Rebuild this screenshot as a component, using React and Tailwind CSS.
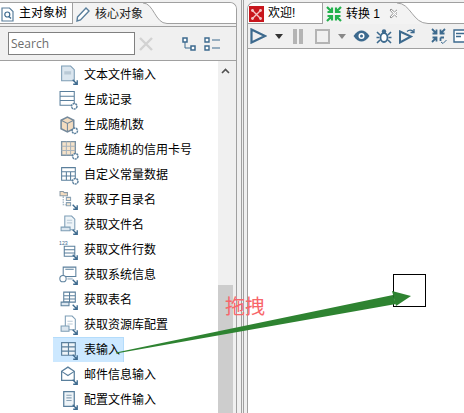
const blue = '#5a7f9c';
const dark = '#3d6a8e';
const light = '#dbe6ef';

// small "output" arrow at the lower right of most step icons
const Corner = () => <path d="M13 14l3.800 3.800M17.300 14.500v3.800h-3.800" stroke={dark} strokeWidth="1.300" fill="none" />;
const Gear = ({ x = 15, y = 15 }) => <circle cx={x} cy={y} r="2.600" fill="#fff" stroke={blue} strokeWidth="1.400" strokeDasharray="2 .6" />;

const icons = {
  textIn: <><path d="M2.500 1h8.500l3.500 3.500V15H2.500z" fill={light} stroke="#7d9db5" /><path d="M5 6h6.500v3H5z" fill="#b9c9d6" /><Corner /></>,
  record: <><path d="M1 1.500h13.500v13H1zM1 6h13.500M1 10h13.500" fill="#fff" stroke={blue} /><Gear x={14.500} y={15.500} /></>,
  random: <><path d="M2 5l6-3 6 3v8l-6 3-6-3z" fill="#f3dcc0" stroke="#74899b" strokeWidth="1.500" /><path d="M2 5l6 3 6-3M8 8v8" stroke="#74899b" fill="none" /><Gear x={15} y={15} /></>,
  credit: <><path d="M2.500 1.500h13v13h-13z" fill="#f5e2c9" stroke="#7d93a5" strokeWidth="1.300" /><path d="M2.500 6h13M2.500 10h13M7 1.500v13M11 1.500v13" stroke="#a9b4bc" fill="none" /><Gear x={15.500} y={15.500} /></>,
  constant: <><path d="M2.500 2.500h13v12h-13zM2.500 6.500h13M7 6.500v8M11 6.500v8M2.500 10.500h13" fill="#fff" stroke={blue} /><Gear x={15.500} y={15.500} /></>,
  subdir: <><path d="M1 1.500h3l1 1h3v3H1z" fill="#f3dcc0" stroke="#8a9aa6" /><path d="M7 7h4v3H7zM7 12h4v3H7z" fill="#f3e6d3" stroke="#8aa2b5" /><path d="M4 6v8h3" stroke="#8aa2b5" strokeDasharray="1.500 1" fill="none" /><Corner /></>,
  fileName: <><path d="M5.500 1h6.500l3 3v10H5.500z" fill="#eef4f8" stroke="#7d9db5" /><path d="M7.500 5h5M7.500 7.500h5" stroke="#b9c9d6" /><path d="M2 11.500h8.500v3.500H2z" fill={light} stroke="#7d9db5" /><Corner /></>,
  rows: <><text x="0" y="4.500" fontSize="5" fill={dark} fontFamily="Liberation Sans, sans-serif">123</text><path d="M5 6h10v9.500H5zM5 9.200h10M5 12.400h10" fill="#fff" stroke={blue} /><Corner /></>,
  sys: <><path d="M4 2h12v9H4z" fill="#fff" stroke={blue} /><path d="M6 4h8" stroke={blue} /><circle cx="3.800" cy="13" r="3" fill="#fff" stroke={blue} /><path d="M8 13h5" stroke="#b9c9d6" strokeWidth="2" /><Corner /></>,
  table: <><path d="M4.500 2h11v9.500h-11zM4.500 5.500h11M10 2v9.500M4.500 8.500h11" fill="#fff" stroke={blue} /><path d="M2 11.500h7.500v3.500H2z" fill={light} stroke={blue} /><Corner /></>,
  repo: <><path d="M6 1h6.500l3 3v10H6z" fill="#fff" stroke="#7d9db5" /><path d="M8 6h5M8 8.500h5" stroke="#b9c9d6" /><path d="M2 10.500h7.500V15.500H2z" fill={light} stroke="#7d9db5" /><Corner /></>,
  tableIn: <><path d="M2.500 2.500h13v12h-13zM2.500 6.500h13M2.500 10.500h13M9 2.500v12" fill="#eef4f8" stroke={blue} strokeWidth="1.100" /><Corner /></>,
  mail: <><path d="M2.500 6l6-4 6 4v8.500h-12z" fill="#fff" stroke={blue} strokeWidth="1.200" /><path d="M2.500 6l6 4 6-4" stroke={blue} fill="none" /><Corner /></>,
  config: <><path d="M4.500 1.500h10v14h-10z" fill="#eef4f8" stroke={blue} strokeWidth="1.200" /><path d="M7 5h5M7 7.500h5M7 10h5" stroke="#8aa2b5" /><Corner /></>,
};

const steps = [
  ['textIn', '文本文件输入'],
  ['record', '生成记录'],
  ['random', '生成随机数'],
  ['credit', '生成随机的信用卡号'],
  ['constant', '自定义常量数据'],
  ['subdir', '获取子目录名'],
  ['fileName', '获取文件名'],
  ['rows', '获取文件行数'],
  ['sys', '获取系统信息'],
  ['table', '获取表名'],
  ['repo', '获取资源库配置'],
  ['tableIn', '表输入'],
  ['mail', '邮件信息输入'],
  ['config', '配置文件输入'],
];

function StepRow({ icon, label }) {
  const selected = label === '表输入';
  return (
    <div className={`flex items-center h-[25px] w-[71px] shrink-0 ${selected ? 'bg-[#cce8ff] border-t border-r border-[#b4dcfb]' : ''}`}>
      <svg width="20" height="20" viewBox="0 0 19 19" className="ml-[6px] shrink-0">{icons[icon]}</svg>
      <span className="ml-[5px] text-[12px] leading-none text-black whitespace-nowrap">{label}</span>
    </div>
  );
}

// the sloping right edge of an active tab
function TabCurve({ width }) {
  return (
    <svg width={width} height="21" viewBox={`0 0 ${width} 21`} preserveAspectRatio="none" className="shrink-0 bg-white">
      <path d={`M0 0C${width * 0.45} 0 ${width * 0.5} 20.500 ${width} 20.500V21H0z`} fill="#f3f3f3" />
      <path d={`M0 0C${width * 0.45} 0 ${width * 0.5} 20.500 ${width} 20.500`} fill="none" stroke="#a0a0a0" />
    </svg>
  );
}

function LeftPanel() {
  return (
    <div className="w-[237px] shrink-0 mt-[2px] h-[411px] flex flex-col border-t border-r border-[#a0a0a0] rounded-tr-[7px] overflow-hidden">
      {/* Tabs */}
      <div className="h-[21px] shrink-0 flex">
        <div className="w-[73px] shrink-0 bg-white border-r border-b border-[#a0a0a0] flex items-center">
          <svg width="13" height="15" viewBox="0 0 13 15" className="ml-[1px] mt-[2px]">
            <path d="M1 1h7.500L12 4.500V14H1z" fill="#fff" stroke={blue} strokeWidth="1.200" />
            <circle cx="6.300" cy="7.500" r="2.500" fill="none" stroke={dark} strokeWidth="1.200" />
            <path d="M8 9.500l2 2" stroke={dark} strokeWidth="1.200" />
          </svg>
          <span className="ml-[5px] text-[12px] leading-none text-black whitespace-nowrap">主对象树</span>
        </div>
        <div className="w-[70px] shrink-0 bg-[#f3f3f3] flex items-center">
          <svg width="16" height="16" viewBox="0 0 16 16" className="ml-[2px] shrink-0">
            <path d="M2.500 11L11 2l3 3L5.500 14l-3.500 1z" fill="#fff" stroke={blue} strokeWidth="1.400" />
          </svg>
          <span className="ml-[4px] text-[12px] leading-none text-[#222] whitespace-nowrap">核心对象</span>
        </div>
        <TabCurve width={24} />
        <div className="flex-1 bg-white border-b border-[#a0a0a0]" />
      </div>
      <div className="h-[3px] shrink-0 bg-[#f0f0f0] border-b border-[#a0a0a0]" />
      {/* Search row */}
      <div className="h-[34px] shrink-0 flex items-center bg-[#f0f0f0] border-b border-[#a0a0a0] pl-[8px]">
        <div className="w-[127px] h-[23px] bg-white border border-[#808080] flex items-center pl-[2px] font-['Open_Sans',sans-serif] text-[12px] text-[#6d6d6d]">Search</div>
        <svg width="14" height="14" viewBox="0 0 14 14" className="ml-[4px]">
          <path d="M1 1l12 12M13 1L1 13" stroke="#d2d2d2" strokeWidth="2.400" />
        </svg>
        <svg width="14" height="14" viewBox="0 0 14 14" className="ml-[29px]">
          <path d="M1 1h4v4H1zM9 9h4v4H9z" fill="#fff" stroke={dark} strokeWidth="1.500" />
          <path d="M3 5v6h6" stroke={dark} fill="none" />
        </svg>
        <svg width="16" height="14" viewBox="0 0 16 14" className="ml-[8px]">
          <path d="M1 1h4v4H1zM1 9h4v4H1z" fill="#fff" stroke={dark} strokeWidth="1.400" />
          <path d="M8 3h8M8 11h8" stroke={dark} />
        </svg>
      </div>
      {/* Tree */}
      <div className="flex-1 min-h-0 flex overflow-hidden bg-[#f0f0f0]">
        <div className="w-[218px] shrink-0 pt-[1px] pl-[53px] bg-white">
          <div className="flex flex-col">
            {steps.map(([icon, label]) => <StepRow key={label} icon={icon} label={label} />)}
          </div>
        </div>
        <div className="w-[15px] shrink-0 flex flex-col items-center">
          <svg width="9" height="6" viewBox="0 0 9 6" className="mt-[7px]">
            <path d="M1 5l3.500-3.500L8 5" stroke="#505050" strokeWidth="1.600" fill="none" />
          </svg>
          <div className="w-full h-[128px] mt-auto bg-[#cdcdcd]" />
        </div>
      </div>
    </div>
  );
}

function Sash() {
  return (
    <div className="w-[10px] shrink-0 h-full flex gap-[1px] pl-[4px]">
      <div className="w-[1px] bg-[#a0a0a0]" />
      <div className="w-[1px] bg-[#a0a0a0]" />
    </div>
  );
}

function RightPanel() {
  return (
    <div className="flex-1 min-w-0 mt-[2px] h-[411px] flex flex-col border-t border-l border-[#a0a0a0] rounded-tl-[7px] overflow-hidden">
      <div className="h-[21px] shrink-0 flex">
        <div className="w-[75px] shrink-0 bg-white border-r border-b border-[#a0a0a0] flex items-center pl-[1px]">
          <div className="w-[15px] h-[16px] mt-[2px] bg-[#c8161d] flex items-center justify-center">
            <svg width="13" height="13" viewBox="0 0 13 13">
              <path d="M2 2l9 9M11 2l-9 9" stroke="#f4c6c6" strokeWidth="1.400" />
              <circle cx="2.500" cy="2.500" r="1.400" fill="#f4c6c6" /><circle cx="10.500" cy="2.500" r="1.400" fill="#f4c6c6" />
              <circle cx="2.500" cy="10.500" r="1.400" fill="#f4c6c6" /><circle cx="10.500" cy="10.500" r="1.400" fill="#f4c6c6" />
            </svg>
          </div>
          <span className="ml-[4px] text-[12px] leading-none text-black whitespace-nowrap">欢迎!</span>
        </div>
        <div className="w-[74px] shrink-0 bg-[#f3f3f3] flex items-center pl-[3px]">
          <svg width="16" height="16" viewBox="0 0 16 16" className="shrink-0">
            <path d="M1 1l5 5M6 1.500V6H1.500M15 1l-5 5M10 1.500V6h4.500M1 15l5-5M6 14.500V10H1.500M15 15l-5-5M10 14.500V10h4.500" stroke="#23b14d" strokeWidth="2.200" fill="none" />
          </svg>
          <span className="ml-[4px] text-[12px] leading-none text-black whitespace-nowrap">转换 1</span>
          <svg width="11" height="11" viewBox="0 0 11 11" className="ml-[9px] shrink-0">
            <path d="M2 1l3.500 3L9 1l1 1-3 3.500 3 3.500-1 1-3.500-3L2 10 1 9l3-3.500L1 2z" fill="#fff" stroke="#777" strokeWidth=".8" />
          </svg>
        </div>
        <TabCurve width={31} />
        <div className="flex-1 bg-white border-b border-[#a0a0a0]" />
      </div>
      {/* Toolbar */}
      <div className="h-[25px] shrink-0 bg-[#f0f0f0] border-b border-[#a0a0a0] flex items-center pl-[2px]">
        <svg width="17" height="16" viewBox="0 0 17 16" className="shrink-0"><path d="M1.500 1.500L15 8 1.500 14.500z" fill="none" stroke={dark} strokeWidth="2.200" /></svg>
        <svg width="8" height="5" viewBox="0 0 8 5" className="ml-[8px] shrink-0"><path d="M0 0h8L4 5z" fill="#333" /></svg>
        <svg width="10" height="15" viewBox="0 0 10 15" className="ml-[10px] shrink-0"><path d="M0 0h4v15H0zM6 0h4v15H6z" fill="#b4b4b4" /></svg>
        <svg width="15" height="15" viewBox="0 0 15 15" className="ml-[12px] shrink-0"><path d="M1 1h13v13H1z" fill="none" stroke="#b4b4b4" strokeWidth="2" /></svg>
        <svg width="8" height="5" viewBox="0 0 8 5" className="ml-[8px] shrink-0"><path d="M0 0h8L4 5z" fill="#888" /></svg>
        <svg width="17" height="12" viewBox="0 0 17 12" className="ml-[7px] shrink-0"><path d="M.5 6C3 2 6 .5 8.500.5S14 2 16.500 6C14 10 11 11.500 8.500 11.500S3 10 .5 6z" fill={dark} /><circle cx="8.500" cy="6" r="3" fill="#fff" /><circle cx="8.500" cy="6" r="1.500" fill={dark} /></svg>
        <svg width="16" height="16" viewBox="0 0 16 16" className="ml-[6px] shrink-0"><ellipse cx="8" cy="9.500" rx="3.500" ry="4.500" fill="#fff" stroke={dark} strokeWidth="1.800" /><circle cx="8" cy="3.500" r="2.200" fill={dark} /><path d="M1 4l3 3M15 4l-3 3M.5 9.500h3M15.500 9.500h-3M1 15l3-3M15 15l-3-3" stroke={dark} strokeWidth="1.600" /></svg>
        <svg width="16" height="16" viewBox="0 0 16 16" className="ml-[7px] shrink-0"><path d="M1 3.500l11 5-11 6z" fill="none" stroke={dark} strokeWidth="2" /><path d="M8 3.500C10 1.500 13 1.500 14.500 4M15 1v3.500h-3.500" stroke={dark} fill="none" strokeWidth="1.300" /></svg>
        <svg width="16" height="16" viewBox="0 0 16 16" className="ml-[16px] shrink-0"><path d="M1 1l4.500 4.500M5.500 1.500v4H1.500M14 1L9.500 5.500M9.500 1.500v4h4M1 14l4.500-4.500M5.500 13.500v-4H1.500M9.500 9.500H13M9.500 9.500V13" stroke={dark} strokeWidth="1.800" fill="none" /><path d="M10 14l2 1.500 3.500-3.500" stroke={dark} fill="none" /></svg>
        <svg width="14" height="16" viewBox="0 0 14 16" className="ml-[6px] shrink-0"><path d="M1 2h11v12H1zM3 5.500h8M3 8.500h5" fill="#fff" stroke={dark} strokeWidth="1.400" /></svg>
      </div>
      <div className="flex-1 bg-white" />
    </div>
  );
}

export default function App() {
  return (
    <div className="relative w-[464px] h-[413px] overflow-hidden flex bg-[#f0f0f0] font-['Liberation_Sans','Noto_Sans_CJK_SC',sans-serif]">
      <LeftPanel />
      <Sash />
      <RightPanel />

      {/* Drag annotation drawn over the screenshot */}
      <div className="absolute left-[393px] top-[274px] w-[33px] h-[33px] border border-black" />
      <svg width="464" height="413" viewBox="0 0 464 413" className="absolute left-0 top-0 pointer-events-none">
        <path d="M116 352.500L393 295L396 304L116 353.500Z" fill="#2e8331" />
        <path d="M392 291L411 296L396 306Z" fill="#2e8331" />
      </svg>
      <span className="absolute left-[225px] top-[297px] text-[20px] leading-none text-[#f8666a] font-['Liberation_Serif','Noto_Sans_CJK_SC',serif]">拖拽</span>
    </div>
  );
}
